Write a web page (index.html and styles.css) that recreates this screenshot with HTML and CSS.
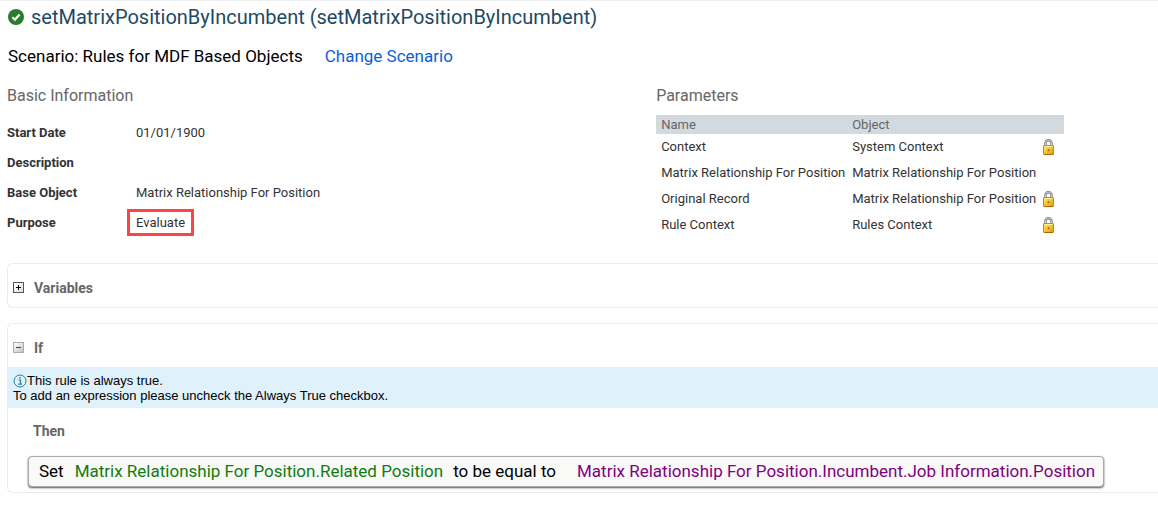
FILE: index.html
```html
<!DOCTYPE html>
<html lang="en">
<head>
<meta charset="utf-8">
<meta name="viewport" content="width=device-width, initial-scale=1">
<title>setMatrixPositionByIncumbent</title>
<link rel="stylesheet" href="styles.css">
</head>
<body>
<svg class="symbols" aria-hidden="true">
  <defs>
    <linearGradient id="brass" x1="0" y1="0" x2="1" y2="1">
      <stop offset="0" stop-color="#ffe87a"/>
      <stop offset="0.5" stop-color="#f5c530"/>
      <stop offset="1" stop-color="#d99a10"/>
    </linearGradient>
    <symbol id="lock" viewBox="0 0 11 16">
      <path d="M2.5 8V4.2a3 3 0 0 1 6 0V8" fill="none" stroke="#777" stroke-width="2.4"/>
      <path d="M2.5 8V4.2a3 3 0 0 1 6 0V8" fill="none" stroke="#ddd" stroke-width="0.9"/>
      <rect x="0.5" y="6.5" width="10" height="9" rx="0.5" fill="url(#brass)" stroke="#c38a1c"/>
      <path d="M1 15.5h9" stroke="#a86a08"/>
      <path d="M1.5 7.5h8" stroke="#fff0a0"/>
      <circle cx="5.5" cy="11.3" r="1" fill="#a0620c"/>
    </symbol>
  </defs>
</svg>
<main class="page">
  <h1 class="title">
    <svg class="title-icon" viewBox="0 0 16 16" role="img" aria-label="Active">
      <circle cx="8" cy="8" r="8" fill="#2b7c2b"/>
      <path d="M4.4 8.3l2.5 2.4 4.7-5.2" fill="none" stroke="#fff" stroke-width="2.2"/>
    </svg>
    setMatrixPositionByIncumbent (setMatrixPositionByIncumbent)
  </h1>
  <p class="scenario"><span>Scenario: Rules for MDF Based Objects</span><a class="scenario-link" href="#">Change Scenario</a></p>

  <div class="overview">
    <section>
      <h2 class="heading">Basic Information</h2>
      <dl class="fields">
        <dt>Start Date</dt><dd>01/01/1900</dd>
        <dt>Description</dt><dd></dd>
        <dt>Base Object</dt><dd>Matrix Relationship For Position</dd>
        <dt>Purpose</dt><dd><span class="highlight">Evaluate</span></dd>
      </dl>
    </section>
    <section>
      <h2 class="heading">Parameters</h2>
      <table class="params">
        <thead><tr><th scope="col">Name</th><th scope="col">Object</th><td></td></tr></thead>
        <tbody>
          <tr><td>Context</td><td>System Context</td><td><svg class="lock" role="img" aria-label="Locked"><use href="#lock"/></svg></td></tr>
          <tr><td>Matrix Relationship For Position</td><td>Matrix Relationship For Position</td><td></td></tr>
          <tr><td>Original Record</td><td>Matrix Relationship For Position</td><td><svg class="lock" role="img" aria-label="Locked"><use href="#lock"/></svg></td></tr>
          <tr><td>Rule Context</td><td>Rules Context</td><td><svg class="lock" role="img" aria-label="Locked"><use href="#lock"/></svg></td></tr>
        </tbody>
      </table>
    </section>
  </div>

  <section class="panel">
    <h2 class="panel-head">
      <button class="toggle toggle-closed" type="button" aria-label="Expand Variables" aria-expanded="false"></button>
      Variables
    </h2>
  </section>

  <section class="panel">
    <h2 class="panel-head">
      <button class="toggle" type="button" aria-label="Collapse If" aria-expanded="true"></button>
      If
    </h2>
    <div class="notice">
      <p class="notice-line"><svg class="info" viewBox="0 0 14 14" aria-hidden="true">
        <circle cx="7" cy="7" r="6" fill="none" stroke="#28809a"/>
        <path d="M5.5 6H7.5v4M5.2 10.2h3.8" fill="none" stroke="#28809a" stroke-width="1.2"/>
        <circle cx="7" cy="3.8" r="0.9" fill="#28809a"/>
      </svg>This rule is always true.</p>
      <p class="notice-line">To add an expression please uncheck the Always True checkbox.</p>
    </div>
    <h3 class="then">Then</h3>
    <div class="statement">
      <span>Set</span>
      <span class="target">Matrix Relationship For Position.Related Position</span>
      <span class="operator">to be equal to</span>
      <span class="source">Matrix Relationship For Position.Incumbent.Job Information.Position</span>
    </div>
  </section>
</main>
</body>
</html>
```
FILE: styles.css
```css
* { box-sizing: border-box; }

body {
  margin: 0;
  background: #fff;
  color: #333;
  font: 13px/18px Roboto, "Liberation Sans", sans-serif;
}

h1, h2, h3, p, dl, dd { margin: 0; }

.symbols { position: absolute; width: 0; height: 0; }

.page {
  border-top: 1px solid #f0f0f0;
  padding: 4px 0 20px 7px;
}

.title {
  display: flex;
  align-items: center;
  gap: 7px;
  padding-left: 1px;
  color: #1d4a63;
  font-size: 20px;
  font-weight: 400;
  line-height: 24px;
}

.title-icon { flex: none; width: 16px; height: 16px; }

.scenario {
  display: flex;
  gap: 22px;
  margin-top: 15px;
  padding-left: 1px;
  color: #000;
  font-size: 17px;
  line-height: 24px;
}

.scenario-link { color: #0a5fd8; text-decoration: none; }

.overview {
  display: grid;
  grid-template-columns: 564fr 436fr;
  margin-top: 18px;
}

.heading {
  color: #666;
  font-size: 16px;
  font-weight: 400;
  line-height: 20px;
}

.fields {
  display: grid;
  grid-template-columns: 129px 1fr;
  grid-auto-rows: 30px;
  align-items: center;
  margin-top: 12px;
}

.fields dt { font-weight: 700; }

.highlight {
  margin-left: -9px;
  border: 3px solid #fb4545;
  padding: 3px 6px;
}

.params {
  width: 408px;
  margin-top: 9px;
  border-collapse: collapse;
  table-layout: fixed;
  white-space: nowrap;
}

.params th, .params td {
  height: 26px;
  padding: 0 5px;
  text-align: left;
  vertical-align: middle;
}

.params thead th, .params thead td {
  height: 19px;
  background: #d2dae0;
  color: #666;
  font-weight: 400;
}

.params th { width: 191px; }

.lock { display: block; width: 11px; height: 16px; }

.panel {
  margin-top: 15px;
  border: 1px solid #ebebeb;
  border-right: 0;
  border-radius: 6px 0 0 6px;
}

.overview + .panel { margin-top: 25px; }

.panel-head {
  display: flex;
  align-items: center;
  gap: 10px;
  height: 43px;
  padding: 4px 0 0 5px;
  color: #666;
  font-size: 14px;
  font-weight: 700;
}

.toggle {
  position: relative;
  width: 11px;
  height: 11px;
  border: 1px solid #aaa;
  padding: 0;
  background: linear-gradient(135deg, #fff, #c4c4c4);
  color: #444;
}

.toggle::before, .toggle-closed::after {
  content: "";
  position: absolute;
  top: 4px;
  left: 2px;
  width: 5px;
  height: 1px;
  background: currentColor;
}

.toggle-closed::after { transform: rotate(90deg); }

.toggle-closed {
  border-color: #555;
  background: linear-gradient(135deg, #fff, #ddd);
  color: #000;
}

.notice {
  padding: 6px 5px 5px;
  background: #dff1fb;
  color: #000;
  font: 13px/15px "Liberation Sans", sans-serif;
}

.notice-line { display: flex; align-items: center; }

.info { width: 14px; height: 14px; }

.then {
  margin: 14px 0 16px 25px;
  color: #666;
  font-size: 14px;
  font-weight: 700;
}

.statement {
  display: flex;
  width: fit-content;
  margin: 0 0 5px 20px;
  border: 1px solid #aaa;
  border-radius: 4px;
  padding: 2px 8px 3px 10px;
  background: #f9f9f8;
  box-shadow: 0 1px 2px #555;
  color: #000;
  font-size: 17px;
  line-height: 24px;
}

.target { margin-left: 11px; color: #107c10; }
.operator { margin-left: 10px; }
.source { margin-left: 21px; color: #800080; }
```
